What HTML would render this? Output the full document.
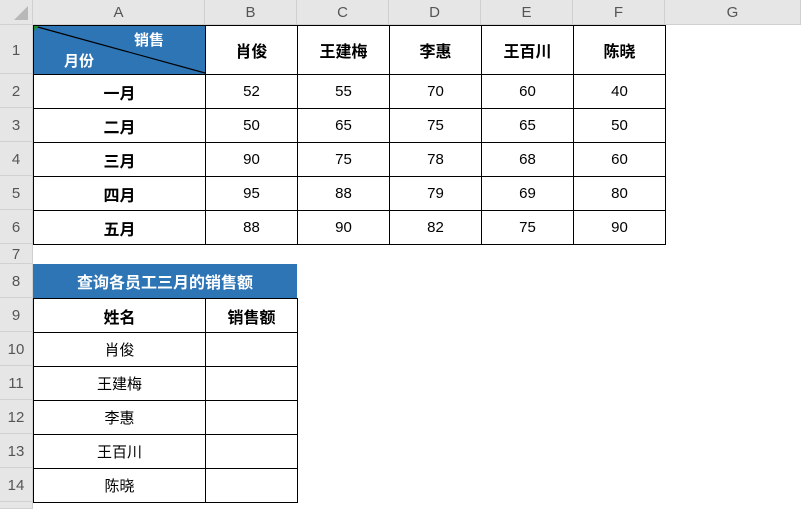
<!DOCTYPE html><html><head><meta charset="utf-8"><style>
html,body{margin:0;width:801px;height:509px;overflow:hidden;background:#fff;font-family:"Liberation Sans","Noto Sans CJK SC",sans-serif;position:relative}
div{position:absolute;box-sizing:border-box}
.h{background:#e6e6e6;color:#555;font-size:15px;display:flex;align-items:center;justify-content:center;border-right:1px solid #d0d0d0;border-bottom:1px solid #d0d0d0}
.c{display:flex;align-items:center;justify-content:center;font-size:15px;color:#000}
.b{font-weight:bold;font-size:16px}
</style></head><body>
<div id="grid"></div>
<script>
var cols=[[33,205,'A'],[205,297,'B'],[297,389,'C'],[389,481,'D'],[481,573,'E'],[573,665,'F'],[665,801,'G']];
var rows=[[25,74],[74,108],[108,142],[142,176],[176,210],[210,244],[244,264],[264,298],[298,332],[332,366],[366,400],[400,434],[434,468],[468,502],[502,509]];
var h='';
h+='<div class="h" style="left:0;top:0;width:33px;height:25px"><svg width="14" height="14" style="position:absolute;right:4px;bottom:4px"><path d="M14 0V14H0Z" fill="#b8b8b8"/></svg></div>';
cols.forEach(function(c){h+='<div class="h" style="left:'+c[0]+'px;top:0;width:'+(c[1]-c[0])+'px;height:25px">'+c[2]+'</div>';});
rows.forEach(function(r,i){h+='<div class="h" style="left:0;top:'+r[0]+'px;width:33px;height:'+(r[1]-r[0])+'px;padding-top:2px">'+(i<14?i+1:'')+'</div>';});
function cell(x1,y1,x2,y2,t,cls,st){h+='<div class="c '+(cls||'')+'" style="left:'+x1+'px;top:'+y1+'px;width:'+(x2-x1+1)+'px;height:'+(y2-y1+1)+'px;border:1px solid #000;'+(st||'')+'">'+t+'</div>';}
var names=['肖俊','王建梅','李惠','王百川','陈晓'];
cell(33,25,205,74,'','', 'background:#2E75B6');
names.forEach(function(n,i){cell(cols[i+1][0],25,cols[i+1][1],74,n,'b');});
var m=['一月','二月','三月','四月','五月'];
var d=[[52,55,70,60,40],[50,65,75,65,50],[90,75,78,68,60],[95,88,79,69,80],[88,90,82,75,90]];
for(var i=0;i<5;i++){cell(33,rows[i+1][0],205,rows[i+1][1],m[i],'b');for(var j=0;j<5;j++)cell(cols[j+1][0],rows[i+1][0],cols[j+1][1],rows[i+1][1],d[i][j]);}
h+='<div class="c b" style="left:33px;top:264px;width:264px;height:34px;background:#2E75B6;color:#fff">查询各员工三月的销售额</div>';
cell(33,298,205,332,'姓名','b');cell(205,298,297,332,'销售额','b');
for(i=0;i<5;i++){cell(33,rows[i+9][0],205,rows[i+9][1],names[i]);cell(205,rows[i+9][0],297,rows[i+9][1],'');}
h+='<svg width="173" height="50" style="position:absolute;left:33px;top:25px"><line x1="1" y1="1" x2="172" y2="48" stroke="#000" stroke-width="1.2"/><path d="M1 1h5L1 6z" fill="#1e8a3a"/><text x="101" y="20" fill="#fff" font-size="15" font-weight="bold" font-family="Liberation Sans,Noto Sans CJK SC,sans-serif">销售</text><text x="31" y="41" fill="#fff" font-size="15" font-weight="bold" font-family="Liberation Sans,Noto Sans CJK SC,sans-serif">月份</text></svg>';
document.getElementById('grid').outerHTML=h;
</script>
</body></html>
